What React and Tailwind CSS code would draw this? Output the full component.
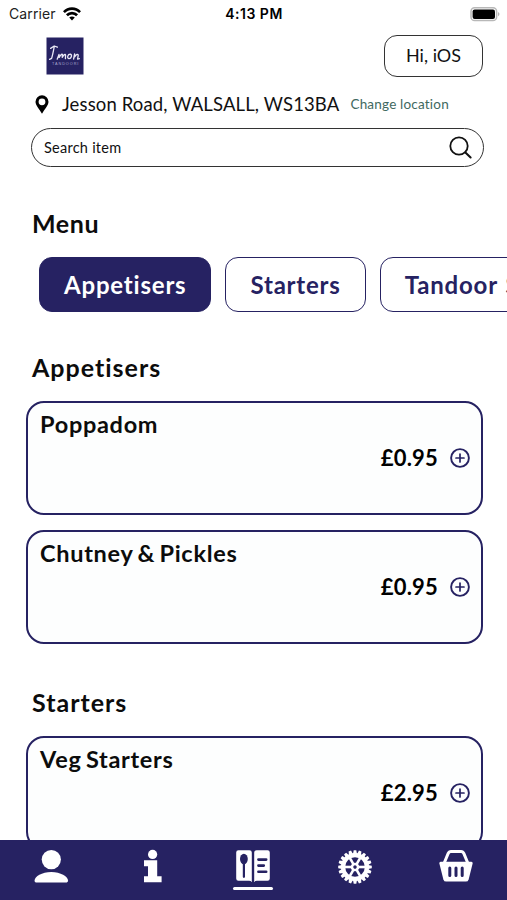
import React, { useState } from 'react';

const categories = ['Appetisers', 'Starters', 'Tandoor Specials'];

const sections = [
  {
    title: 'Appetisers',
    items: [
      { name: 'Poppadom', price: '£0.95' },
      { name: 'Chutney & Pickles', price: '£0.95' },
    ],
  },
  {
    title: 'Starters',
    items: [{ name: 'Veg Starters', price: '£2.95' }],
  },
];

const StatusBar = () => (
  <div className="grid h-7 grid-cols-3 items-center pl-[8px] pr-[7px] font-['Inter'] text-[14px] leading-7 text-[#222]">
    <div className="flex items-center gap-[7px] pl-px">
      <span className="tracking-[0.1px]">Carrier</span>
      <svg width="18" height="14" viewBox="0 0 18 14" fill="none" stroke="#000" strokeWidth="2.7">
        <path d="M0.9 5.2 C5.4 0.4 12.6 0.4 17.1 5.2" />
        <path d="M3.9 8.3 C6.8 5.3 11.2 5.3 14.1 8.3" />
        <path d="M9 13.4 L6.2 10.5 C7.8 9 10.2 9 11.8 10.5 Z" fill="#000" stroke="none" />
      </svg>
    </div>
    <span className="text-center text-[14px] font-semibold tracking-[0.5px] text-black">4:13 PM</span>
    <div className="flex justify-end">
      <svg width="30" height="15" viewBox="0 0 30 15">
        <rect x="1" y="0.8" width="25.6" height="12.8" rx="3.6" fill="#fff" stroke="#b8b8b8" strokeWidth="1.5" />
        <rect x="2.6" y="2.4" width="22.4" height="9.6" rx="2" fill="#000" />
        <path d="M28 5 C30 5.9 30 8.3 28 9.2 Z" fill="#b5b5b5" />
      </svg>
    </div>
  </div>
);

const Logo = () => (
  <svg width="38" height="38" viewBox="0 0 38 38">
    <rect x="0.5" y="0.5" width="37" height="37" fill="#262262" />
    <g fill="none" stroke="#e9e7f5" strokeWidth="1.3" strokeLinecap="round" strokeLinejoin="round">
      <path d="M4.6 11.4 L8.2 9 L11.4 10.2 M8.2 9.8 C7.4 14 6.6 18 5.6 21.4 L3.6 22.4" />
      <path d="M11.2 22.2 L13 17.4 L13.2 20.4 C14.4 18 16 16.6 16.5 17.5 L16.2 20.4 C17.8 17.4 19.4 16.8 19.6 18 L19.4 21.6" />
      <path d="M24.4 17.2 C21.6 17 20.8 21.2 22.8 21.6 C25.4 21.8 26.4 18 24.4 17.2" />
      <path d="M27.6 22 L28.6 17 L28.8 19.8 C30.2 17 32.2 16.6 32.2 18.4 L31.6 22.2 L33.4 21.6" />
    </g>
    <text x="6" y="28.4" fontSize="3.8" letterSpacing="0.95" fill="#a9a6cf" fontFamily="Liberation Sans, sans-serif">TANDOORI</text>
  </svg>
);

const PinIcon = () => (
  <svg width="14" height="19" viewBox="0 0 14 19">
    <path
      fillRule="evenodd"
      d="M7 0.3 A6.5 6.5 0 0 0 0.5 6.8 C0.5 10.2 4.2 14 7 18.7 C9.8 14 13.5 10.2 13.5 6.8 A6.5 6.5 0 0 0 7 0.3 Z M7 3.4 A3.4 3.4 0 1 1 7 10.2 A3.4 3.4 0 1 1 7 3.4 Z"
    />
  </svg>
);

const SearchIcon = () => (
  <svg width="24" height="24" viewBox="0 0 24 24" fill="none" stroke="#111" strokeWidth="1.8" strokeLinecap="round">
    <circle cx="10" cy="10" r="8.7" />
    <path d="M16.4 16.4 L21.6 21.4" strokeWidth="2.1" />
  </svg>
);

const PlusIcon = () => (
  <svg width="20" height="20" viewBox="0 0 20 20" fill="none" stroke="#262262" strokeWidth="1.7" strokeLinecap="round">
    <circle cx="10" cy="10" r="8.9" strokeWidth="1.9" />
    <path d="M10 6 V14 M6 10 H14" />
  </svg>
);

const PersonIcon = () => (
  <svg width="36" height="36" viewBox="0 0 36 36" fill="#fff">
    <circle cx="18.3" cy="10.6" r="9.6" />
    <path d="M18.3 23 C27.5 23 35 27.6 35 31.4 C35 32.8 34.2 33.6 32.8 33.6 H3.8 C2.2 33.6 1.6 32.8 1.6 31.4 C1.6 27.6 8.8 23 18.3 23 Z" />
  </svg>
);

const InfoIcon = () => (
  <svg width="36" height="36" viewBox="0 0 36 36" fill="#fff">
    <circle cx="18.6" cy="5.4" r="4.6" />
    <path d="M10 11.2 H23.2 V27.2 H27.6 V33.2 H10 V27.2 H14 V17.2 H10 Z" />
  </svg>
);

const MenuIcon = () => (
  <svg width="36" height="36" viewBox="0 0 36 36">
    <path
      d="M3.4 1.2 H14.4 Q16.8 1.2 16.8 3.6 V33.2 Q16 31.8 14 31.8 H3.4 Q1.2 31.8 1.2 29.6 V3.4 Q1.2 1.2 3.4 1.2 Z M21.6 1.2 H32.6 Q34.8 1.2 34.8 3.4 V29.6 Q34.8 31.8 32.6 31.8 H22 Q20 31.8 19.2 33.2 V3.6 Q19.2 1.2 21.6 1.2 Z"
      fill="#fff"
    />
    <ellipse cx="8.9" cy="10" rx="3.9" ry="5.2" fill="#262262" />
    <path d="M8.9 13 V27.8" stroke="#262262" strokeWidth="2.2" strokeLinecap="round" />
    <path d="M23.4 10.6 H31.2 M23.4 16.6 H28.8 M23.4 22.8 H31.2" stroke="#262262" strokeWidth="2.6" strokeLinecap="round" />
  </svg>
);

const teeth = Array.from({ length: 20 }, (_, i) => i * 18);
const spokes = [0, 60, 120, 180, 240, 300];

const GearIcon = () => (
  <svg width="36" height="36" viewBox="-18 -18 36 36">
    <g fill="#fff">
      {teeth.map((angle) => (
        <path key={angle} d="M-2 -13 L-1.3 -16.8 H1.3 L2 -13 Z" transform={`rotate(${angle})`} />
      ))}
    </g>
    <circle r="11.9" fill="none" stroke="#fff" strokeWidth="4.2" />
    <g stroke="#fff" strokeWidth="2.6">
      {spokes.map((angle) => (
        <path key={angle} d="M3 0 H11" transform={`rotate(${angle})`} />
      ))}
    </g>
    <circle r="3" fill="none" stroke="#fff" strokeWidth="2.6" />
  </svg>
);

const BasketIcon = () => (
  <svg width="36" height="36" viewBox="0 0 36 36">
    <path d="M6.2 14 L10.2 4.4 Q11 2.4 13 2.4 H23 Q25 2.4 25.8 4.4 L29.8 14" fill="none" stroke="#fff" strokeWidth="3" />
    <path
      d="M2.6 12.8 H33.4 Q34.9 12.8 34.6 14.6 L30.6 30.4 Q30 32.6 27.8 32.6 H8.2 Q6 32.6 5.4 30.4 L1.4 14.6 Q1.1 12.8 2.6 12.8 Z"
      fill="#fff"
    />
    <path d="M11.8 19 V26.4 M18 19 V26.4 M24.2 19 V26.4" stroke="#262262" strokeWidth="3" strokeLinecap="round" />
  </svg>
);

const MenuCard = ({ item }) => (
  <div className="h-[114px] rounded-[18px] border-2 border-[#262262] bg-[#fdfefe] pl-3 pr-[11px] pt-[6px]">
    <h3 className="text-[23.5px] font-bold leading-[30px] tracking-[0.7px] text-[#0c0c0c] [word-spacing:-2px]">
      {item.name}
    </h3>
    <div className="mt-[4px] flex items-center justify-end gap-3">
      <span className="text-[22px] font-bold leading-[30px] tracking-[0.2px] text-black">{item.price}</span>
      <button className="cursor-pointer">
        <PlusIcon />
      </button>
    </div>
  </div>
);

const tabs = [
  { name: 'account', Icon: PersonIcon },
  { name: 'info', Icon: InfoIcon },
  { name: 'menu', Icon: MenuIcon },
  { name: 'settings', Icon: GearIcon },
  { name: 'basket', Icon: BasketIcon },
];

const App = () => {
  const [category, setCategory] = useState('Appetisers');
  const [tab, setTab] = useState('menu');

  return (
    <div className="flex h-[900px] w-[507px] flex-col overflow-hidden bg-white font-['Lato',sans-serif] text-[#111]">
      <StatusBar />

      <main className="min-h-0 flex-1 overflow-hidden">
        <div className="flex items-start justify-between pl-[46px] pr-6 pt-[7px]">
          <div className="pt-[2px]">
            <Logo />
          </div>
          <button className="h-[42px] w-[99px] rounded-[13px] border-[1.5px] border-[#333] pb-[2px] text-[18px]">
            Hi, iOS
          </button>
        </div>

        <div className="mt-[15px] flex h-6 items-center whitespace-nowrap pl-[35px]">
          <PinIcon />
          <span className="ml-[13px] text-[18.5px] leading-6 tracking-[0.13px]">Jesson Road, WALSALL, WS13BA</span>
          <span className="ml-[11px] text-[13.5px] leading-6 tracking-[0.2px] text-[#41695f]">Change location</span>
        </div>

        <div className="ml-[31px] mr-[23px] mt-3 flex h-[39px] items-center justify-between rounded-full border-[1.5px] border-[#333] pl-3 pr-[10px]">
          <span className="text-[14.5px] tracking-[0.25px]">Search item</span>
          <SearchIcon />
        </div>

        <h1 className="mt-[41px] pl-8 text-[25px] font-bold leading-[30px] tracking-[0.6px] text-[#0c0c0c]">Menu</h1>

        <div className="mt-[19px] flex gap-[14px] overflow-hidden pl-[39px]">
          {categories.map((name) => (
            <button
              key={name}
              onClick={() => setCategory(name)}
              className={`h-[55px] shrink-0 whitespace-nowrap rounded-[13px] border-[1.5px] border-[#262262] px-6 text-[24px] font-bold tracking-[0.8px] [word-spacing:1.5px] ${
                category === name ? 'bg-[#262262] text-white' : 'bg-white text-[#262262]'
              }`}
            >
              {name}
            </button>
          ))}
        </div>

        {sections.map((section) => (
          <section key={section.title} className="mb-[43px] mt-10 pl-[26px] pr-6">
            <h2 className="pl-[6px] text-[25px] font-bold leading-[30px] tracking-[1px] text-[#0c0c0c]">
              {section.title}
            </h2>
            <div className="mt-[19px] flex flex-col gap-[15px]">
              {section.items.map((item) => (
                <MenuCard key={item.name} item={item} />
              ))}
            </div>
          </section>
        ))}
      </main>

      <nav className="grid h-[60px] shrink-0 grid-cols-5 bg-[#262262]">
        {tabs.map(({ name, Icon }) => (
          <button key={name} onClick={() => setTab(name)} className="flex flex-col items-center pt-[9px]">
            <Icon />
            {tab === name && <span className="mt-[2px] h-[3px] w-10 rounded-full bg-white" />}
          </button>
        ))}
      </nav>
    </div>
  );
};

export default App;
